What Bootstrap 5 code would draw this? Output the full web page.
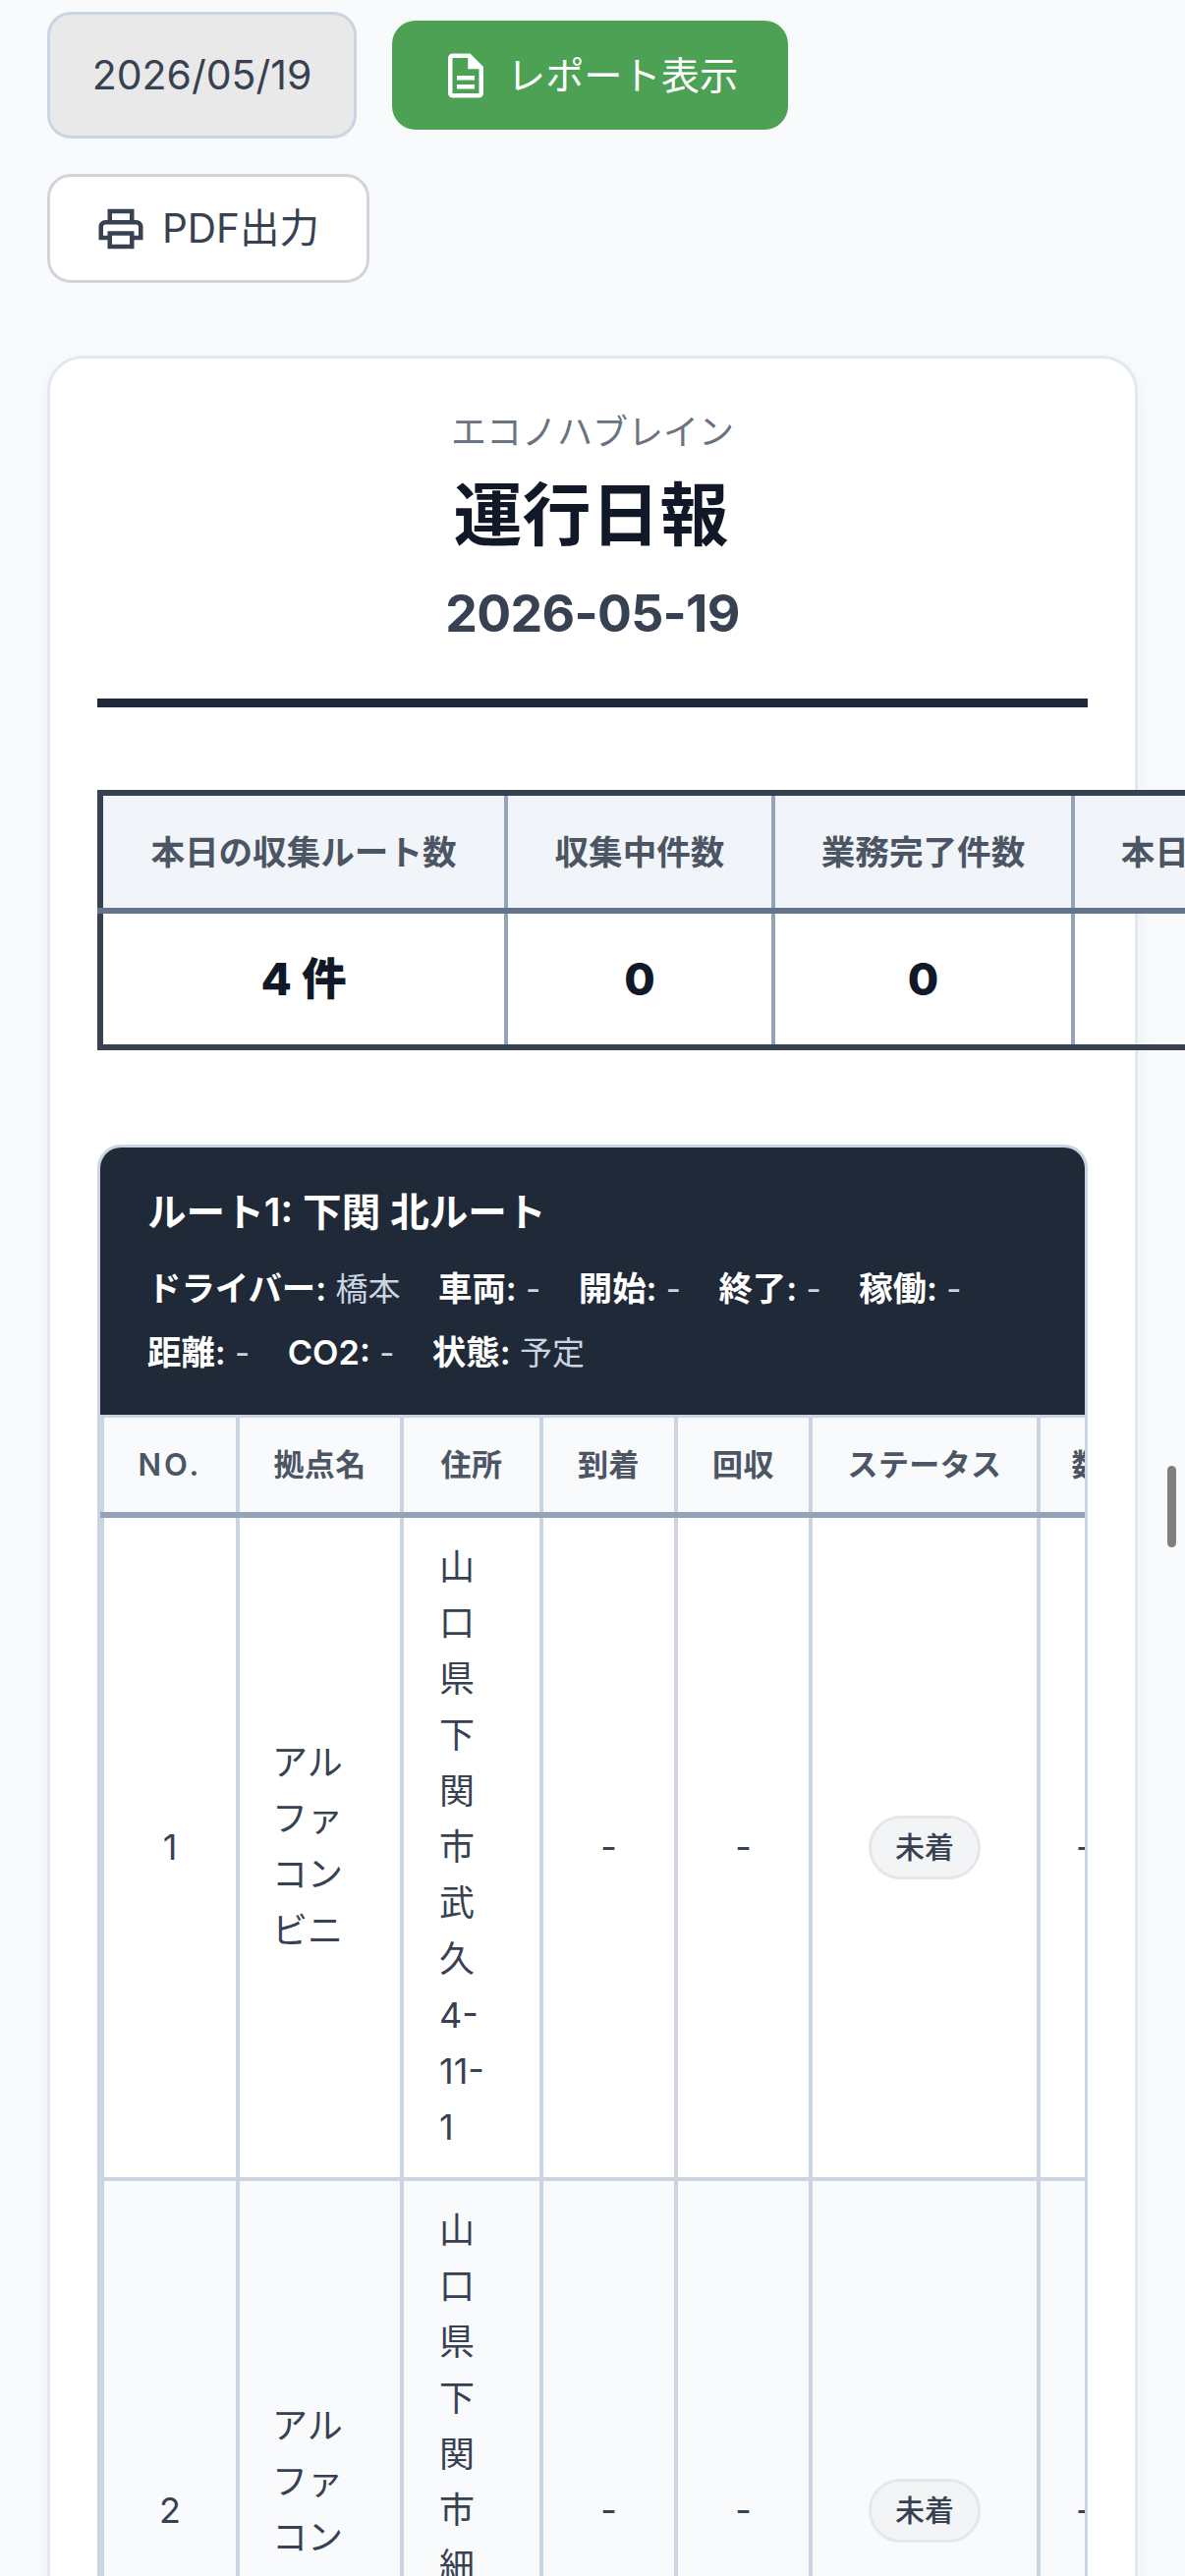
<!DOCTYPE html>
<html lang="ja">
<head>
<meta charset="utf-8">
<title>運行日報</title>
<link rel="stylesheet" href="https://cdn.jsdelivr.net/npm/bootstrap@5.3.0/dist/css/bootstrap.min.css">
<style>
html,body{overflow-x:hidden}
body{background:#f9fafb;font-family:Inter,"Noto Sans CJK JP",sans-serif;color:#374151;font-size:42px;min-height:2622px;overflow-y:hidden}
.page-wrap{padding:12px 48px 0}
.tool-row{display:flex;flex-wrap:wrap;align-items:center;gap:36px 36px;margin-bottom:74px}
.date-box{width:315px;height:129px;border:3px solid #cbd5e1;border-radius:24px;background:#e9e9e9;color:#374151;font-size:41px;line-height:123px;padding:0;text-align:center}
.act-btn{display:inline-flex;align-items:center;height:111px;border-radius:24px;font-weight:400;line-height:63px;white-space:nowrap}
.act-green{background:#4ca154;border:0;color:#fff;width:403px;padding:0 48px;gap:15px;font-size:39.2px}
.act-white{background:#fff;border:3px solid #d1d5db;color:#374151;width:328px;padding:0 45px;gap:15px;font-size:40.5px}
.act-btn svg{width:54px;height:54px;fill:currentColor;flex:none}
.sheet{border:3px solid #e2e8f0;border-radius:36px;background:#fff;padding:48px;width:1110px;box-shadow:0 6px 18px rgba(15,23,42,.05)}
.sheet-head{text-align:center;border-bottom:9px solid #1f2937;margin-bottom:84px;height:307px}
.co-name{font-size:36px;line-height:54px;color:#6b7280;margin:0 0 12px}
.rep-title{font-size:70px;line-height:92px;font-weight:700;color:#111827;margin:0 0 13px;padding-right:3px}
.rep-date{font-size:51.8px;letter-spacing:-.7px;line-height:81px;font-weight:700;color:#374151;margin:0}
.metric-tbl{border-collapse:collapse;table-layout:fixed;width:1365px;border:6px solid #374151;margin:0 0 96px;text-align:center}
.metric-tbl th{background:#f1f5f9;color:#4b5563;font-size:34.6px;font-weight:600;height:120px;padding:0;border:4px solid #94a3b8;border-bottom:6px solid #64748b;line-height:54px}
.metric-tbl td{font-size:45.6px;font-weight:800;color:#111827;height:139px;padding:0;border:4px solid #94a3b8;line-height:72px}
.route-box{border:3px solid #cbd5e1;border-radius:24px;overflow:hidden;width:1008px}
.route-head{background:#1f2937;color:#fff;padding:35px 48px 24px;height:272px}
.route-name{font-size:39.6px;line-height:63px;font-weight:600;margin:0 0 14px}
.route-meta{font-size:33px;line-height:64.8px;color:#cbd5e1;display:flex;flex-wrap:wrap;column-gap:38.5px}
.route-meta b{color:#fff;font-weight:600;font-size:34.4px}
.route-scroll{overflow:hidden}
.stop-tbl{border-collapse:collapse;table-layout:fixed;width:1250px;font-size:36px;line-height:57px;color:#374151;margin:0;text-align:center}
.stop-tbl th{background:#f8fafc;color:#4b5563;font-weight:600;font-size:31px;letter-spacing:.4px;padding:0;height:100px;border:4px solid #cbd5e1;border-bottom:6px solid #94a3b8;border-top:3px solid #cbd5e1}
.stop-tbl th.no-head{letter-spacing:3px}
.stop-tbl td{padding:22px 36px;border:4px solid #cbd5e1;vertical-align:middle}
.stop-tbl tbody tr:nth-child(even) td{background:#f8fafc}
.stop-tbl .lft{text-align:left}
.stop-tbl .site{padding-left:33px}
.stop-tbl .addr{padding-right:44px}
.pill-state{display:inline-block;background:#f3f4f6;border:3px solid #e5e7eb;border-radius:99px;color:#374151;font-size:30px;font-weight:500;line-height:45px;padding:7px 24px}
.fake-scroll{position:fixed;right:9px;top:1492px;width:9px;height:83px;border-radius:6px;background:#7f7f7f}
</style>
</head>
<body>
<div class="page-wrap">
  <div class="tool-row">
    <div class="date-box">2026/05/19</div>
    <button class="btn act-btn act-green" type="button">
      <svg viewBox="0 0 24 24"><path d="M8 16h8v2H8zm0-4h8v2H8zm6-10H6c-1.1 0-2 .9-2 2v16c0 1.1.89 2 1.99 2H18c1.1 0 2-.9 2-2V8l-6-6zm4 18H6V4h7v5h5v11z"/></svg>
      <span>レポート表示</span>
    </button>
    <button class="btn act-btn act-white" type="button">
      <svg viewBox="0 0 24 24"><path d="M19 8h-1V3H6v5H5c-1.66 0-3 1.34-3 3v6h4v4h12v-4h4v-6c0-1.66-1.34-3-3-3zM8 5h8v3H8V5zm8 12v2H8v-4h8v2zm2-2v-2H6v2H4v-4c0-.55.45-1 1-1h14c.55 0 1 .45 1 1v4h-2z"/></svg>
      <span>PDF出力</span>
    </button>
  </div>
  <div class="sheet">
    <div class="sheet-head">
      <p class="co-name">エコノハブレイン</p>
      <h1 class="rep-title">運行日報</h1>
      <h2 class="rep-date">2026-05-19</h2>
    </div>
    <table class="metric-tbl">
      <colgroup><col style="width:413px"><col style="width:272px"><col style="width:305px"><col style="width:375px"></colgroup>
      <thead><tr><th>本日の収集ルート数</th><th>収集中件数</th><th>業務完了件数</th><th>本日の総走行距離</th></tr></thead>
      <tbody><tr><td>4 件</td><td>0</td><td>0</td><td>0 km</td></tr></tbody>
    </table>
    <div class="route-box">
      <div class="route-head">
        <h3 class="route-name">ルート1: 下関 北ルート</h3>
        <div class="route-meta">
          <span><b>ドライバー:</b> 橋本</span><span><b>車両:</b> -</span><span><b>開始:</b> -</span><span><b>終了:</b> -</span><span><b>稼働:</b> -</span>
          <span><b>距離:</b> -</span><span><b>CO2:</b> -</span><span><b>状態:</b> 予定</span>
        </div>
      </div>
      <div class="route-scroll">
        <table class="stop-tbl">
          <colgroup><col style="width:138px"><col style="width:167px"><col style="width:142px"><col style="width:137px"><col style="width:137px"><col style="width:232px"><col style="width:130px"><col style="width:166px"></colgroup>
          <thead><tr><th class="no-head">NO.</th><th>拠点名</th><th>住所</th><th>到着</th><th>回収</th><th>ステータス</th><th>数量</th><th>備考</th></tr></thead>
          <tbody>
            <tr><td>1</td><td class="lft site">アルファコンビニ</td><td class="lft addr">山口県下関市武久4-11-1</td><td>-</td><td>-</td><td><span class="pill-state">未着</span></td><td class="lft">-</td><td>-</td></tr>
            <tr><td>2</td><td class="lft site">アルファコンビニ</td><td class="lft addr">山口県下関市細江町1-1-1</td><td>-</td><td>-</td><td><span class="pill-state">未着</span></td><td class="lft">-</td><td>-</td></tr>
          </tbody>
        </table>
      </div>
    </div>
  </div>
</div>
<div class="fake-scroll"></div>
<script src="https://cdn.jsdelivr.net/npm/bootstrap@5.3.0/dist/js/bootstrap.bundle.min.js"></script>
</body>
</html>
